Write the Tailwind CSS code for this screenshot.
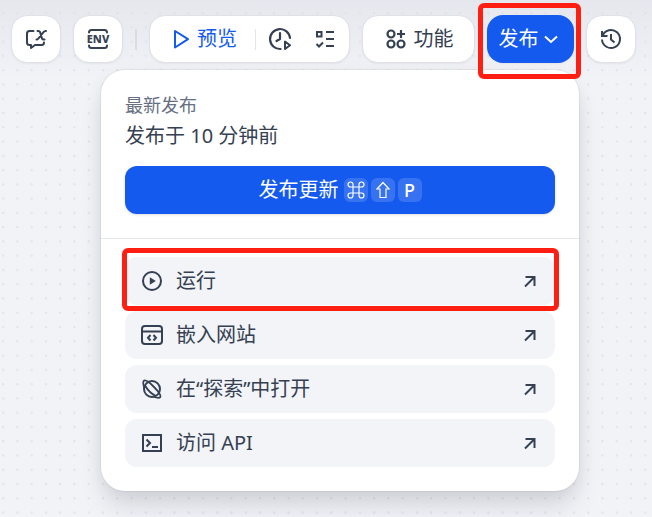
<!DOCTYPE html>
<html lang="zh-CN">
<head>
<meta charset="utf-8">
<meta name="viewport" content="width=device-width, initial-scale=1">
<title>发布</title>
<script src="https://cdn.jsdelivr.net/npm/@tailwindcss/browser@4"></script>
</head>
<body class="relative isolate min-h-screen overflow-hidden bg-[#f2f3f7] font-['Noto_Sans','Noto_Sans_CJK_SC',sans-serif] text-[20px] leading-[30px] text-[#354052]">
<!-- dotted canvas -->
<svg class="absolute inset-0 -z-10 h-full w-full" aria-hidden="true">
  <defs>
    <pattern id="dots" x="2" y="12" width="14.27" height="14.27" patternUnits="userSpaceOnUse"><circle cx="1.2" cy="1.2" r="1.1" fill="#dfe1e6"/></pattern>
  </defs>
  <rect width="100%" height="100%" fill="url(#dots)"/>
</svg>
<div class="absolute inset-x-0 top-0 -z-10 h-20 bg-linear-to-b from-[#dcdfe7]/60 to-[#f2f3f7]/0"></div>

<header class="flex items-center gap-3 pt-[15px] pl-[11px]">
  <button type="button" aria-label="对话变量" class="flex h-12 w-[50px] shrink-0 items-center justify-center rounded-2xl border border-[#dfe1e7] bg-white shadow-xs">
    <svg class="size-6" viewBox="0 0 24 24" fill="none" stroke="currentColor" stroke-width="2" stroke-linecap="round" stroke-linejoin="round"><path d="M9.5 4H5.5Q3 4 3 6.500V15.500Q3 18 5.500 18H7V21L11 18H17.500Q20 18 20 15.500"/><path d="M13.500 4H14.500Q15.500 4 16 5L18 11.500Q18.500 12.500 19.500 12.500H20.500M22 4H21.500Q20.500 4 19.500 5.200L14.500 11.300Q13.500 12.500 12.500 12.500"/></svg>
  </button>
  <button type="button" aria-label="环境变量" class="flex h-12 w-[50px] shrink-0 items-center justify-center rounded-2xl border border-[#dfe1e7] bg-white shadow-xs">
    <svg class="size-6" viewBox="0 0 24 24" fill="none" stroke="currentColor" stroke-width="2" stroke-linecap="round" stroke-linejoin="round"><path d="M3 5.500Q3 3 5.500 3H18.500Q21 3 21 5.500M3 18.500Q3 21 5.500 21H18.500Q21 21 21 18.500"/><text x="12" y="16" text-anchor="middle" class="font-['Noto_Sans',sans-serif] text-[11px] font-extrabold" fill="currentColor" stroke="none">ENV</text></svg>
  </button>
  <span class="h-[21px] w-[2px] shrink-0 bg-[#d9dce2]"></span>
  <div class="flex h-12 w-[201px] shrink-0 items-center rounded-2xl border border-[#dfe1e7] bg-white pl-[19px] shadow-xs">
    <button type="button" class="flex items-center gap-1 text-[#155aef]">
      <svg class="size-6" viewBox="0 0 24 24" fill="none" stroke="currentColor" stroke-width="2" stroke-linejoin="round"><path d="M6 4V20.500L19 12.200Z"/></svg>
      预览
    </button>
    <span class="ml-[18px] h-[21px] w-px bg-[#e3e5ea]"></span>
    <button type="button" aria-label="运行历史" class="ml-3">
      <svg class="size-6" viewBox="0 0 24 24" fill="none" stroke="currentColor" stroke-width="2.200" stroke-linecap="round" stroke-linejoin="round"><path d="M22 11A10 10 0 1 0 12.500 22M12 6V12L8.500 14"/><path d="M17 14.500V22L22 18.200Z" stroke-width="2"/></svg>
    </button>
    <button type="button" aria-label="检查清单" class="ml-[21px]">
      <svg class="size-6" viewBox="0 0 24 24" fill="none" stroke="currentColor" stroke-width="2"><path d="M4 5H8.500V9.500H4ZM13 5H21M13 12H21M13 19H21M3.500 17L6 19.500L10 15.500"/></svg>
    </button>
  </div>
  <button type="button" class="flex h-12 w-[113px] shrink-0 items-center justify-center gap-1.5 rounded-2xl border border-[#dfe1e7] bg-white shadow-xs">
    <svg class="size-6" viewBox="0 0 24 24" fill="none" stroke="currentColor" stroke-width="2.200"><circle cx="7" cy="7" r="3.500"/><circle cx="7" cy="17" r="3.500"/><circle cx="17" cy="17" r="3.500"/><path d="M17 3V11M13 7H21"/></svg>
    功能
  </button>
  <div class="relative z-20 shrink-0">
    <button type="button" aria-expanded="true" class="flex h-12 w-[87px] items-center justify-center rounded-2xl bg-[#155aef] text-white shadow-xs">
      发布
      <svg class="size-6" viewBox="0 0 24 24" fill="none" stroke="currentColor" stroke-width="2"><path d="M6 9.500L12 15L18 9.500"/></svg>
    </button>
    <span class="pointer-events-none absolute -top-3 -right-[7px] -bottom-4 -left-[9px] rounded-md border-[5px] border-[#ff1f12]"></span>
  </div>
  <button type="button" aria-label="版本历史" class="flex h-12 w-[50px] shrink-0 items-center justify-center rounded-2xl border border-[#dfe1e7] bg-white shadow-xs">
    <svg class="size-6" viewBox="0 0 24 24" fill="none" stroke="currentColor" stroke-width="2"><path d="M3 4V9H8.500M3.500 9A9 9 0 1 1 3 12.500M12 7V12.500L15.500 15.500"/></svg>
  </button>
</header>

<main class="mt-[7px] mr-[73px] ml-[101px] rounded-3xl bg-white shadow-[0_0_1px_1px_rgba(16,24,40,0.05),0_18px_26px_-4px_rgba(16,24,40,0.13),0_4px_18px_0_rgba(16,24,40,0.05)]">
  <section class="px-6 pt-5 pb-6">
    <p class="text-[18px] text-[#676f83]">最新发布</p>
    <p class="leading-8">发布于 10 分钟前</p>
    <button type="button" class="mt-3.5 flex h-12 w-full items-center justify-center gap-[5px] rounded-xl bg-[#155aef] text-white shadow-sm">
      发布更新
      <span class="flex gap-[3px] text-[18px] leading-6">
        <kbd class="flex size-6 items-center justify-center rounded-md bg-white/15"><svg class="size-5" viewBox="0 0 20 20" fill="none" stroke="currentColor" stroke-width="1.200" role="img" aria-label="Command"><path d="M7 7H13V13H7ZM7 7H4.500A2.500 2.500 0 1 1 7 4.500ZM13 7V4.500A2.500 2.500 0 1 1 15.500 7ZM13 13H15.500A2.500 2.500 0 1 1 13 15.500ZM7 13V15.500A2.500 2.500 0 1 1 4.500 13Z"/></svg></kbd>
        <kbd class="flex size-6 items-center justify-center rounded-md bg-white/15"><svg class="size-5" viewBox="0 0 20 20" fill="none" stroke="currentColor" stroke-width="1.200" role="img" aria-label="Shift"><path d="M10 2.500L16 9H13V17.500H7V9H4Z"/></svg></kbd>
        <kbd class="flex size-6 items-center justify-center rounded-md bg-white/15 font-['Noto_Sans',sans-serif] font-medium">P</kbd>
      </span>
    </button>
  </section>
  <nav class="flex flex-col gap-1.5 border-t border-[#e6e8ec] px-6 pt-[18px] pb-6">
    <div class="relative">
      <a href="#run" class="flex h-12 items-center gap-3 rounded-xl bg-[#f2f4f7] px-[15px]">
        <svg class="size-6" viewBox="0 0 24 24" fill="none" stroke="currentColor" stroke-width="2"><circle cx="12" cy="12" r="9"/><path d="M9.800 8.200V15.800L15.800 12Z" fill="currentColor" stroke="none"/></svg>
        <span class="flex-1">运行</span>
        <svg class="size-5" viewBox="0 0 20 20" fill="none" stroke="currentColor" stroke-width="2"><path d="M5.500 6H14.500V15M14.500 6L5 15.500"/></svg>
      </a>
      <span class="pointer-events-none absolute -top-[9px] -right-1 -bottom-1.5 -left-[3px] z-10 rounded-md border-[5px] border-[#ff1f12]"></span>
    </div>
    <a href="#embed" class="flex h-12 items-center gap-3 rounded-xl bg-[#f2f4f7] px-[15px]">
      <svg class="size-6" viewBox="0 0 24 24" fill="none" stroke="currentColor" stroke-width="2"><rect x="2" y="3" width="20" height="18" rx="3"/><path d="M2 8.500H22M10.500 12L8 14.700L10.500 17.500M13.500 12L16 14.700L13.500 17.500"/></svg>
      <span class="flex-1">嵌入网站</span>
      <svg class="size-5" viewBox="0 0 20 20" fill="none" stroke="currentColor" stroke-width="2"><path d="M5.500 6H14.500V15M14.500 6L5 15.500"/></svg>
    </a>
    <a href="#explore" class="flex h-12 items-center gap-3 rounded-xl bg-[#f2f4f7] px-[15px]">
      <svg class="size-6" viewBox="0 0 24 24" fill="none" stroke="currentColor" stroke-width="2"><circle cx="12" cy="12" r="8"/><path d="M4.500 11C3 7 2.800 4.800 3.800 3.800C5.500 2.500 9.500 5.500 13.500 9.500C18 14 21.500 18.500 20.200 20.200C19 21.200 17 21 13 19.500M5 8.500C7 12 11.500 17 16 19" stroke-width="1.800"/></svg>
      <span class="flex-1">在“探索”中打开</span>
      <svg class="size-5" viewBox="0 0 20 20" fill="none" stroke="currentColor" stroke-width="2"><path d="M5.500 6H14.500V15M14.500 6L5 15.500"/></svg>
    </a>
    <a href="#api" class="flex h-12 items-center gap-3 rounded-xl bg-[#f2f4f7] px-[15px]">
      <svg class="size-6" viewBox="0 0 24 24" fill="none" stroke="currentColor" stroke-width="2"><path d="M3 4H21V20H3ZM6.500 8.500L10 12L6.500 15.500M12 16H18"/></svg>
      <span class="flex-1">访问 API</span>
      <svg class="size-5" viewBox="0 0 20 20" fill="none" stroke="currentColor" stroke-width="2"><path d="M5.500 6H14.500V15M14.500 6L5 15.500"/></svg>
    </a>
  </nav>
</main>
</body>
</html>
